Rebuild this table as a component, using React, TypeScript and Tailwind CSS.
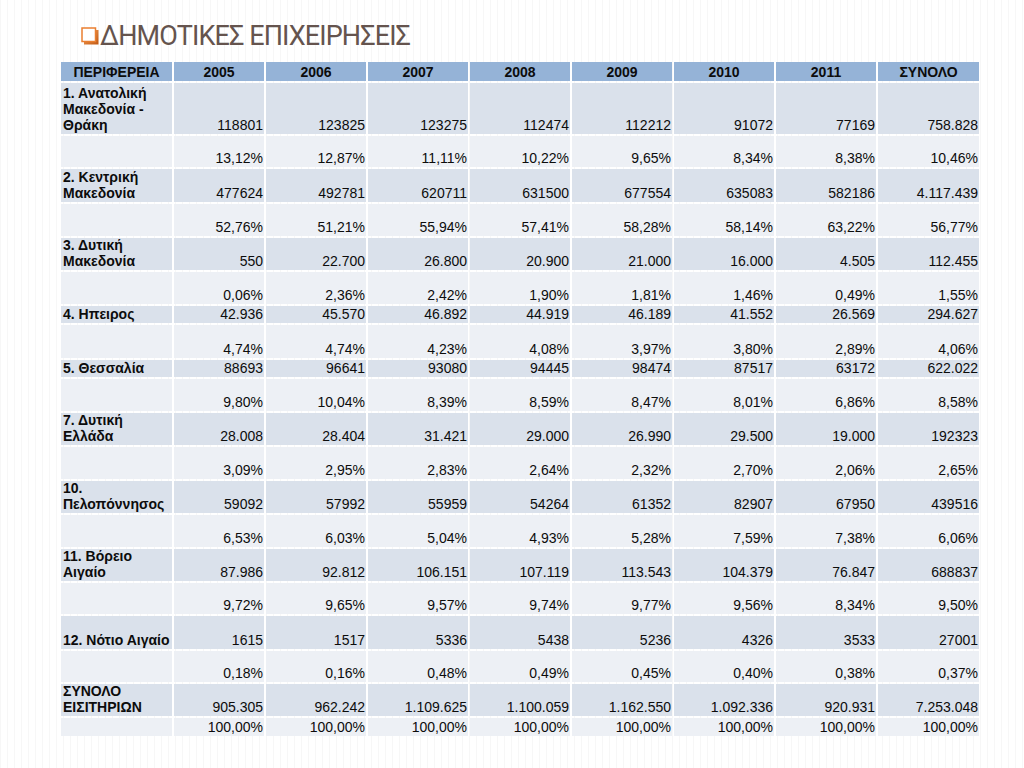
import React from "react";

type Row = {
  label?: string[];
  values: string[];
  h: string;
  kind: "main" | "pct";
};

const years = ["2005", "2006", "2007", "2008", "2009", "2010", "2011", "ΣΥΝΟΛΟ"];

const rows: Row[] = [
  { kind: "main", h: "h-[51px]", label: ["1. Ανατολική", "Μακεδονία -", "Θράκη"], values: ["118801", "123825", "123275", "112474", "112212", "91072", "77169", "758.828"] },
  { kind: "pct", h: "h-[31px]", values: ["13,12%", "12,87%", "11,11%", "10,22%", "9,65%", "8,34%", "8,38%", "10,46%"] },
  { kind: "main", h: "h-[33px]", label: ["2. Κεντρική", "Μακεδονία"], values: ["477624", "492781", "620711", "631500", "677554", "635083", "582186", "4.117.439"] },
  { kind: "pct", h: "h-[32px]", values: ["52,76%", "51,21%", "55,94%", "57,41%", "58,28%", "58,14%", "63,22%", "56,77%"] },
  { kind: "main", h: "h-[32px]", label: ["3. Δυτική", "Μακεδονία"], values: ["550", "22.700", "26.800", "20.900", "21.000", "16.000", "4.505", "112.455"] },
  { kind: "pct", h: "h-[32px]", values: ["0,06%", "2,36%", "2,42%", "1,90%", "1,81%", "1,46%", "0,49%", "1,55%"] },
  { kind: "main", h: "h-[17px]", label: ["4. Ηπειρος"], values: ["42.936", "45.570", "46.892", "44.919", "46.189", "41.552", "26.569", "294.627"] },
  { kind: "pct", h: "h-[33px]", values: ["4,74%", "4,74%", "4,23%", "4,08%", "3,97%", "3,80%", "2,89%", "4,06%"] },
  { kind: "main", h: "h-[17px]", label: ["5. Θεσσαλία"], values: ["88693", "96641", "93080", "94445", "98474", "87517", "63172", "622.022"] },
  { kind: "pct", h: "h-[32px]", values: ["9,80%", "10,04%", "8,39%", "8,59%", "8,47%", "8,01%", "6,86%", "8,58%"] },
  { kind: "main", h: "h-[32px]", label: ["7. Δυτική", "Ελλάδα"], values: ["28.008", "28.404", "31.421", "29.000", "26.990", "29.500", "19.000", "192323"] },
  { kind: "pct", h: "h-[32px]", values: ["3,09%", "2,95%", "2,83%", "2,64%", "2,32%", "2,70%", "2,06%", "2,65%"] },
  { kind: "main", h: "h-[32px]", label: ["10.", "Πελοπόννησος"], values: ["59092", "57992", "55959", "54264", "61352", "82907", "67950", "439516"] },
  { kind: "pct", h: "h-[32px]", values: ["6,53%", "6,03%", "5,04%", "4,93%", "5,28%", "7,59%", "7,38%", "6,06%"] },
  { kind: "main", h: "h-[32px]", label: ["11. Βόρειο", "Αιγαίο"], values: ["87.986", "92.812", "106.151", "107.119", "113.543", "104.379", "76.847", "688837"] },
  { kind: "pct", h: "h-[31px]", values: ["9,72%", "9,65%", "9,57%", "9,74%", "9,77%", "9,56%", "8,34%", "9,50%"] },
  { kind: "main", h: "h-[33px]", label: ["12. Νότιο Αιγαίο"], values: ["1615", "1517", "5336", "5438", "5236", "4326", "3533", "27001"] },
  { kind: "pct", h: "h-[31px]", values: ["0,18%", "0,16%", "0,48%", "0,49%", "0,45%", "0,40%", "0,38%", "0,37%"] },
  { kind: "main", h: "h-[32px]", label: ["ΣΥΝΟΛΟ", "ΕΙΣΙΤΗΡΙΩΝ"], values: ["905.305", "962.242", "1.109.625", "1.100.059", "1.162.550", "1.092.336", "920.931", "7.253.048"] },
  { kind: "pct", h: "h-[18px]", values: ["100,00%", "100,00%", "100,00%", "100,00%", "100,00%", "100,00%", "100,00%", "100,00%"] },
];

function ShadowBox() {
  return (
    <svg width="18" height="18" viewBox="0 0 18 18" className="mt-[5px] mr-[1px] shrink-0">
      <defs>
        <linearGradient id="shade" x1="0" y1="0" x2="1" y2="1">
          <stop offset="0" stopColor="#f6a25c" />
          <stop offset="1" stopColor="#c05812" />
        </linearGradient>
      </defs>
      <path d="M3 3 H17.5 V17.5 H3 Z" fill="url(#shade)" />
      <rect x="1" y="1" width="13.5" height="13.5" fill="#ffffff" stroke="#ea7f30" strokeWidth="1.5" />
    </svg>
  );
}

export default function App() {
  return (
    <div className="w-[1024px] h-[768px] bg-white bg-[repeating-linear-gradient(90deg,#f7f7f7_0_1px,transparent_1px_7px)] overflow-hidden font-['Liberation_Sans',Arial,sans-serif]">
      <div className="flex items-start pl-[81px] pt-[22px] h-[58px]">
        <ShadowBox />
        <h1 className="font-['Liberation_Sans_Narrow','Roboto',sans-serif] text-[27px] leading-[28px] text-[#65544e] tracking-[-0.9px]">
          ΔΗΜΟΤΙΚΕΣ ΕΠΙΧΕΙΡΗΣΕΙΣ
        </h1>
      </div>
      <table className="ml-[59px] mt-[2px] border-separate border-spacing-[2px] text-[14px] leading-[16px] text-[#0c0c0c]">
        <thead>
          <tr className="bg-[#95b3d7]">
            <th className="w-[111px] font-bold p-0">
              <div className="h-[19px] flex items-center justify-center">ΠΕΡΙΦΕΡΕΙΑ</div>
            </th>
            {years.map((y, i) => (
              <th key={y} className={`${i === 0 ? "w-[90px]" : i === 7 ? "w-[101px]" : "w-[100px]"} font-bold p-0`}>
                <div className="h-[19px] flex items-center justify-center">{y}</div>
              </th>
            ))}
          </tr>
        </thead>
        <tbody>
          {rows.map((r, ri) => (
            <tr key={ri} className={r.kind === "main" ? "bg-[#dae1eb]" : "bg-[#edf0f5]"}>
              <td className="font-bold p-0 whitespace-nowrap">
                <div className={`${r.h} flex flex-col justify-end pl-[2px] pb-[1px]`}>
                  {r.label?.map((l) => (
                    <div key={l}>{l}</div>
                  ))}
                </div>
              </td>
              {r.values.map((v, vi) => (
                <td key={vi} className="p-0 whitespace-nowrap">
                  <div className={`${r.h} flex flex-col justify-end items-end pr-[1px] pb-[1px]`}>{v}</div>
                </td>
              ))}
            </tr>
          ))}
        </tbody>
      </table>
    </div>
  );
}
